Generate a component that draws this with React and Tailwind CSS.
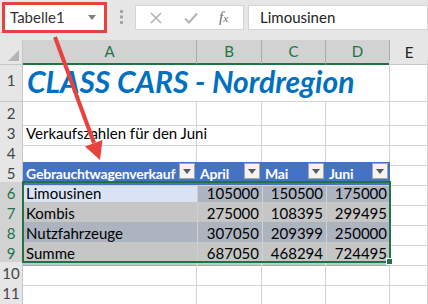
import React from 'react';

const cols = 'grid grid-cols-[23px_174px_65px_64px_64px_1fr]';
const font = { fontFamily: 'Lato, "Open Sans", sans-serif' };

const FilterBtn = () => (
  <span className="absolute right-[2px] top-[1px] w-[16px] h-[16px] bg-[#f3f3f3] border border-[#a6a6a6] flex items-center justify-center">
    <svg width="8" height="5" viewBox="0 0 8 5"><path d="M0 0h8L4 5z" fill="#595959" /></svg>
  </span>
);

const RowHead = ({ n, sel }) => (
  <div
    className={`flex items-center justify-center border-r border-b text-[15px] ${
      sel ? 'bg-[#d2d2d2] text-[#217346] border-[#ababab]' : 'bg-[#e6e6e6] text-[#444] border-[#c6c6c6]'
    }`}
  >
    {n}
  </div>
);

const Cell = ({ children, className = '' }) => (
  <div className={`border-r border-b border-[#d4d4d4] flex items-center px-[3px] text-[15px] text-black whitespace-nowrap overflow-hidden ${className}`}>
    {children}
  </div>
);

const data = [
  ['Limousinen', 105000, 150500, 175000],
  ['Kombis', 275000, 108395, 299495],
  ['Nutzfahrzeuge', 307050, 209399, 250000],
  ['Summe', 687050, 468294, 724495],
];

export default function App() {
  return (
    <div className="relative w-[428px] h-[304px] overflow-hidden bg-white" style={font}>
      {/* formula bar */}
      <div className="h-[40px] bg-[#e6e6e6] flex items-start">
        <div className="mt-[2px] ml-[2px] w-[105px] h-[31px] border-[3px] border-[#e8423f] bg-white flex items-center justify-between pl-[5px] pr-[8px]">
          <span className="text-[15px] text-[#333]">Tabelle1</span>
          <svg width="8" height="5" viewBox="0 0 8 5"><path d="M0 0h8L4 5z" fill="#808080" /></svg>
        </div>
        <div className="w-[28px] h-[40px] flex items-center justify-center pb-[6px]">
          <svg width="3" height="14" viewBox="0 0 3 14">
            <rect y="0" width="3" height="3" fill="#a6a6a6" />
            <rect y="5.5" width="3" height="3" fill="#a6a6a6" />
            <rect y="11" width="3" height="3" fill="#a6a6a6" />
          </svg>
        </div>
        <div className="mt-[5px] w-[109px] h-[25px] bg-white border border-[#d4d4d4] flex items-center">
          <svg className="ml-[14px]" width="12" height="12" viewBox="0 0 12 12">
            <path d="M1 1l10 10M11 1L1 11" stroke="#b3b3b3" strokeWidth="1.6" />
          </svg>
          <svg className="ml-[22px]" width="14" height="12" viewBox="0 0 14 12">
            <path d="M1 6.5l4 4L13 1.5" stroke="#b3b3b3" strokeWidth="2" fill="none" />
          </svg>
          <span className="ml-[21px] text-[15px] italic text-[#6b6b6b]" style={{ fontFamily: '"Liberation Serif", serif' }}>
            f<span className="text-[11px]">x</span>
          </span>
        </div>
        <div className="mt-[5px] ml-[4px] flex-1 h-[25px] bg-white border border-[#d4d4d4] flex items-center pl-[11px]">
          <span className="text-[15px] text-[#222]">Limousinen</span>
        </div>
      </div>

      <div className="relative">
        {/* column headers */}
        <div className={`${cols} h-[20px]`}>
          <div className="bg-[#e6e6e6] border-r border-b border-[#c6c6c6] relative">
            <svg className="absolute right-[3px] bottom-[3px]" width="11" height="11" viewBox="0 0 11 11">
              <path d="M11 0v11H0z" fill="#b4b4b4" />
            </svg>
          </div>
          {['A', 'B', 'C', 'D'].map((c) => (
            <div key={c} className="bg-[#d2d2d2] border-r border-[#ababab] border-b-2 border-b-[#217346] flex items-center justify-center text-[15px] text-[#217346]">
              {c}
            </div>
          ))}
          <div className="bg-[#e6e6e6] border-b border-[#c6c6c6] flex items-center justify-center text-[15px] text-[#222]">E</div>
        </div>

        {/* row 1 */}
        <div className={`${cols} h-[42px]`}>
          <RowHead n="1" />
          <div className="col-span-4 border-b border-r border-[#d4d4d4] flex items-end pl-[4px] pb-[5px] overflow-visible">
            <span className="text-[30px] leading-none font-bold italic text-[#0070c0] whitespace-nowrap">CLASS CARS - Nordregion</span>
          </div>
          <Cell />
        </div>

        {/* rows 2-4 */}
        {['2', '3', '4'].map((n) => (
          <div key={n} className={`${cols} h-[20px]`}>
            <RowHead n={n} />
            <Cell className="overflow-visible">{n === '3' ? 'Verkaufszahlen für den Juni' : ''}</Cell>
            <Cell />
            <Cell />
            <Cell />
            <Cell />
          </div>
        ))}

        {/* row 5 table header */}
        <div className={`${cols} h-[20px]`}>
          <RowHead n="5" />
          {['Gebrauchtwagenverkauf', 'April', 'Mai', 'Juni'].map((h) => (
            <div key={h} className="relative bg-[#4472c4] border-b border-[#d4d4d4] flex items-center px-[3px] text-[14px] tracking-[-0.2px] font-bold text-white whitespace-nowrap overflow-hidden">
              {h}
              <FilterBtn />
            </div>
          ))}
          <Cell />
        </div>

        {/* rows 6-9 data */}
        {data.map((r, i) => {
          const dark = i % 2 === 0;
          const body = dark ? 'bg-[#adb4c0]' : 'bg-[#c6c6c6]';
          return (
            <div key={r[0]} className={`${cols} h-[20px]`}>
              <RowHead n={String(i + 6)} sel />
              <div className={`${i === 0 ? 'bg-[#dae3f3]' : body} border-b border-[#8ea9db] flex items-center px-[3px] text-[15px] text-black`}>
                {r[0]}
              </div>
              {r.slice(1).map((v, j) => (
                <div key={j} className={`${body} border-b border-[#8ea9db] border-l border-l-[#d0d0d0] flex items-center justify-end px-[3px] text-[15px] text-black`}>
                  {v}
                </div>
              ))}
              <Cell />
            </div>
          );
        })}

        {/* rows 10-12 */}
        {['10', '11', ''].map((n, k) => (
          <div key={k} className={`${cols} h-[20px]`}>
            <RowHead n={n} />
            <Cell />
            <Cell />
            <Cell />
            <Cell />
            <Cell />
          </div>
        ))}

        {/* selection A6:D9 */}
        <div className="absolute left-[22px] top-[141px] w-[369px] h-[82px] border-2 border-[#217346] pointer-events-none" />
        <div className="absolute left-[386px] top-[218px] w-[7px] h-[7px] bg-[#217346] border border-white pointer-events-none" />
      </div>

      {/* red arrow */}
      <svg className="absolute left-0 top-0 pointer-events-none" width="428" height="304" viewBox="0 0 428 304">
        <line x1="55" y1="37" x2="94" y2="143" stroke="#e8423f" strokeWidth="4" />
        <polygon points="100,160 102.5,140 85,146.5" fill="#e8423f" />
      </svg>
    </div>
  );
}
